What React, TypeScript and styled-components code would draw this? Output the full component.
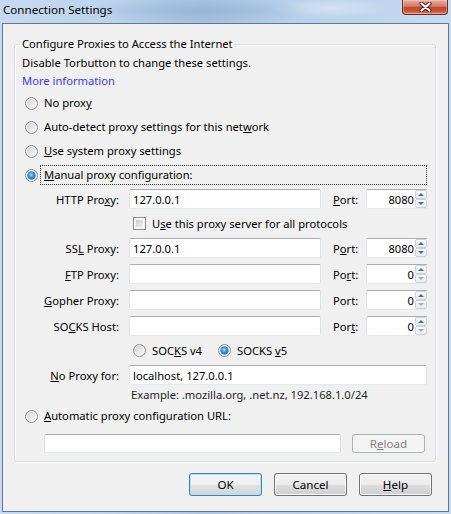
import React from 'react';
import styled, { createGlobalStyle, css } from 'styled-components';

const GlobalStyle = createGlobalStyle`
  html, body {
    margin: 0;
    padding: 0;
  }
  body {
    font-family: 'Noto Sans', 'Segoe UI', sans-serif;
    font-size: 11.2px;
    color: #000;
    background: #fff;
  }
  * {
    box-sizing: border-box;
  }
  u {
    text-decoration: underline;
    text-underline-offset: 1px;
  }
`;

const Window = styled.div`
  width: 451px;
  height: 514px;
  display: flex;
  flex-direction: column;
  padding: 0 2px 2px;
  background:
    radial-gradient(ellipse 110px 16px at 200px 11px, rgba(150, 180, 214, 0.9), rgba(150, 180, 214, 0)),
    radial-gradient(ellipse 60px 10px at 330px 8px, rgba(214, 228, 244, 0.9), rgba(214, 228, 244, 0)),
    linear-gradient(90deg, #c6dbf1 0%, #bdd3ec 25%, #adc6e2 45%, #b9d0ea 65%, #c7dbf1 100%);
`;

const TitleBar = styled.div`
  height: 23px;
  display: flex;
  justify-content: space-between;
  align-items: flex-start;
`;

const Title = styled.div`
  padding-left: 1px;
  line-height: 20px;
  font-size: 11.6px;
  color: #000;
`;

const CloseButton = styled.div`
  width: 46px;
  height: 15px;
  margin-right: 1px;
  border: 1px solid #6e2b20;
  border-top: none;
  border-radius: 0 0 4px 4px;
  background: linear-gradient(#e9aa9b 0%, #d67a66 45%, #c4452c 52%, #c8553a 80%, #dc8a6d 100%);
  box-shadow: inset 0 0 0 1px rgba(255, 255, 255, 0.3);
  display: flex;
  align-items: center;
  justify-content: center;
`;

const Client = styled.div`
  flex: 1;
  display: flex;
  flex-direction: column;
  background: #f0f0f0;
  border: 1px solid #62778f;
  padding: 12px 12px 0 11px;
`;

const GroupBox = styled.fieldset`
  margin: 0;
  padding: 0;
  min-width: 0;
  border: 1px solid #d5dfe5;
  border-radius: 3px;
  box-shadow: inset 1px 1px 0 #fff, 1px 1px 0 #fff;
`;

const Legend = styled.legend`
  margin-left: 5px;
  padding: 0 2px;
  line-height: 16px;
`;

const Body = styled.div`
  display: flex;
  flex-direction: column;
  padding: 0 7px 8px 7px;
`;

const Line = styled.div<{ $mt?: number; $indent?: number; $color?: string }>`
  height: 18px;
  line-height: 18px;
  margin-top: ${(p) => p.$mt ?? 0}px;
  padding-left: ${(p) => p.$indent ?? 0}px;
  color: ${(p) => p.$color ?? '#000'};
  white-space: nowrap;
`;

const RadioList = styled.div`
  display: flex;
  flex-direction: column;
  margin-top: 1px;
`;

const RadioRow = styled.div`
  display: flex;
  align-items: center;
  height: 24px;
  padding-left: 3px;
`;

const Radio = styled.span<{ $checked?: boolean }>`
  flex: none;
  width: 13px;
  height: 13px;
  border-radius: 50%;
  border: 1px solid #8d8f91;
  background: linear-gradient(135deg, #cdcdcd 0%, #e9e9e9 55%, #fbfbfb 100%);
  box-shadow: inset 0 0 0 1px #f6f6f6;
  display: flex;
  align-items: center;
  justify-content: center;
  ${(p) =>
    p.$checked &&
    css`
      &::after {
        content: '';
        width: 7px;
        height: 7px;
        border-radius: 50%;
        background: radial-gradient(circle at 45% 40%, #a9e4ff 0%, #2b93d6 45%, #0b4c86 100%);
        box-shadow: 0 0 0 0.5px #1b4f7e;
      }
    `}
`;

const RadioLabel = styled.span<{ $focused?: boolean }>`
  margin-left: 2px;
  padding: 0 3px;
  line-height: 18px;
  border: 1px dotted transparent;
  white-space: nowrap;
  ${(p) =>
    p.$focused &&
    css`
      flex: 1;
      margin-right: 1px;
      border-color: #3a3a3a;
    `}
`;

const ProxyRow = styled.div<{ $mt?: number }>`
  display: flex;
  align-items: center;
  height: 20px;
  margin-top: ${(p) => p.$mt ?? 6}px;
`;

const FieldLabel = styled.span`
  width: 97px;
  margin-right: 10px;
  text-align: right;
  white-space: nowrap;
`;

const TextField = styled.input<{ $width: number; $height?: number }>`
  width: ${(p) => p.$width}px;
  height: ${(p) => p.$height ?? 20}px;
  margin: 0;
  padding: 0 3px;
  font: inherit;
  color: #000;
  background: #fff;
  border: 1px solid;
  border-color: #abadb3 #dbdfe6 #e3e9ef #e2e3ea;
  border-radius: 2px;
  outline: none;
`;

const PortLabel = styled.span`
  width: 33px;
  margin-left: 12px;
  white-space: nowrap;
`;

const PortBox = styled.div`
  display: flex;
  width: 61px;
  height: 20px;
`;

const PortInput = styled(TextField)`
  text-align: right;
  padding: 0 1px 0 3px;
  border-right: none;
  border-radius: 2px 0 0 2px;
`;

const Spinner = styled.div`
  width: 12px;
  display: flex;
  flex-direction: column;
  border-top: 1px solid #abadb3;
  border-bottom: 1px solid #e3e9ef;
  background: #fff;
`;

const SpinButton = styled.div<{ $down?: boolean; $off?: boolean }>`
  flex: 1;
  display: flex;
  align-items: center;
  justify-content: center;
  border: 1px solid #cdd2d8;
  border-radius: 2px;
  background: linear-gradient(#f8f8f8, #e9ebee);
  &::after {
    content: '';
    border-left: 3px solid transparent;
    border-right: 3px solid transparent;
    ${(p) =>
      p.$down
        ? css`
            border-top: 3px solid ${p.$off ? '#a7a9ac' : '#4d6c9c'};
          `
        : css`
            border-bottom: 3px solid ${p.$off ? '#a7a9ac' : '#4d6c9c'};
          `}
  }
`;

const OptionRow = styled.div`
  display: flex;
  align-items: center;
  height: 17px;
  margin-top: 6px;
  padding-left: 111px;
`;

const Option = styled.label<{ $width?: number }>`
  display: flex;
  align-items: center;
  width: ${(p) => (p.$width ? `${p.$width}px` : 'auto')};
  white-space: nowrap;
`;

const OptionText = styled.span`
  margin-left: 6px;
`;

const CheckBox = styled.span`
  flex: none;
  width: 13px;
  height: 13px;
  border: 1px solid #8e8f8f;
  padding: 2px;
  background: linear-gradient(135deg, #c6c8cb, #f4f4f4) content-box, #f6f6f6;
`;

const UrlRow = styled.div`
  display: flex;
  align-items: center;
  margin-top: 6px;
  padding-left: 22px;
  height: 19px;
`;

const ButtonRow = styled.div`
  display: flex;
  justify-content: flex-end;
  gap: 12px;
  margin-top: 11px;
  padding-right: 4px;
`;

const Button = styled.button<{ $primary?: boolean; $height?: number; $ml?: number }>`
  width: 73px;
  height: ${(p) => p.$height ?? 23}px;
  margin: 0 0 0 ${(p) => p.$ml ?? 0}px;
  padding: 0;
  font: inherit;
  font-size: 11.6px;
  color: #000;
  border: 1px solid #707070;
  border-radius: 3px;
  background: linear-gradient(#f2f2f2 0%, #ebebeb 50%, #dddddd 51%, #cfcfcf 100%);
  box-shadow: inset 0 0 0 1px #fcfcfc;
  ${(p) =>
    p.$primary &&
    css`
      border-color: #3c7fb1;
      box-shadow: inset 0 0 0 1px #b5e3f8;
      background: linear-gradient(#f4f6f7 0%, #eceeef 50%, #e0e2e3 51%, #d3d6d8 100%);
    `}
  &:disabled {
    color: #838383;
    border-color: #adb2b5;
    background: #f4f4f4;
    box-shadow: none;
  }
`;

const CloseGlyph = () => (
  <svg width="13" height="10" viewBox="0 0 13 10">
    <path d="M2.5 1.5 L10.5 8.5 M10.5 1.5 L2.5 8.5" stroke="#5b2218" strokeWidth="4.2" strokeLinecap="round" />
    <path d="M2.5 1.5 L10.5 8.5 M10.5 1.5 L2.5 8.5" stroke="#ffffff" strokeWidth="2.2" strokeLinecap="round" />
  </svg>
);

const Spin = ({ atMin }: { atMin?: boolean }) => (
  <Spinner>
    <SpinButton />
    <SpinButton $down $off={atMin} />
  </Spinner>
);

const Port = ({ value, label }: { value: string; label: React.ReactNode }) => (
  <>
    <PortLabel>{label}</PortLabel>
    <PortBox>
      <PortInput $width={49} readOnly value={value} />
      <Spin atMin={value === '0'} />
    </PortBox>
  </>
);

interface ProxyProps {
  label: React.ReactNode;
  host: string;
  port: string;
  portLabel: React.ReactNode;
  mt?: number;
}

const ProxyLine = ({ label, host, port, portLabel, mt }: ProxyProps) => (
  <ProxyRow $mt={mt}>
    <FieldLabel>{label}</FieldLabel>
    <TextField $width={192} readOnly value={host} />
    <Port value={port} label={portLabel} />
  </ProxyRow>
);

export default function App() {
  return (
    <>
      <GlobalStyle />
      <Window>
        <TitleBar>
          <Title>Connection Settings</Title>
          <CloseButton>
            <CloseGlyph />
          </CloseButton>
        </TitleBar>
        <Client>
          <GroupBox>
            <Legend>Configure Proxies to Access the Internet</Legend>
            <Body>
              <Line $mt={2}>Disable Torbutton to change these settings.</Line>
              <Line $color="#3b3bf2">More information</Line>
              <RadioList>
                <RadioRow>
                  <Radio />
                  <RadioLabel>
                    No prox<u>y</u>
                  </RadioLabel>
                </RadioRow>
                <RadioRow>
                  <Radio />
                  <RadioLabel>
                    Auto-detect proxy settings for this net<u>w</u>ork
                  </RadioLabel>
                </RadioRow>
                <RadioRow>
                  <Radio />
                  <RadioLabel>
                    <u>U</u>se system proxy settings
                  </RadioLabel>
                </RadioRow>
                <RadioRow>
                  <Radio $checked />
                  <RadioLabel $focused>
                    <u>M</u>anual proxy configuration:
                  </RadioLabel>
                </RadioRow>
              </RadioList>

              <ProxyLine
                mt={2}
                label={<>HTTP Pro<u>x</u>y:</>}
                host="127.0.0.1"
                port="8080"
                portLabel={<><u>P</u>ort:</>}
              />
              <OptionRow>
                <Option>
                  <CheckBox />
                  <OptionText>
                    U<u>s</u>e this proxy server for all protocols
                  </OptionText>
                </Option>
              </OptionRow>
              <ProxyLine
                label={<>SS<u>L</u> Proxy:</>}
                host="127.0.0.1"
                port="8080"
                portLabel={<>P<u>o</u>rt:</>}
              />
              <ProxyLine
                label={<><u>F</u>TP Proxy:</>}
                host=""
                port="0"
                portLabel={<>Po<u>r</u>t:</>}
              />
              <ProxyLine
                label={<><u>G</u>opher Proxy:</>}
                host=""
                port="0"
                portLabel="Port:"
              />
              <ProxyLine
                label={<>SO<u>C</u>KS Host:</>}
                host=""
                port="0"
                portLabel={<>Por<u>t</u>:</>}
              />
              <OptionRow>
                <Option $width={85}>
                  <Radio />
                  <OptionText>
                    SOC<u>K</u>S v4
                  </OptionText>
                </Option>
                <Option>
                  <Radio $checked />
                  <OptionText>
                    SOCKS <u>v</u>5
                  </OptionText>
                </Option>
              </OptionRow>
              <ProxyRow>
                <FieldLabel>
                  <u>N</u>o Proxy for:
                </FieldLabel>
                <TextField $width={298} readOnly value="localhost, 127.0.0.1" />
              </ProxyRow>
              <Line $mt={1} $indent={109} $color="#1e1e1e">
                Example: .mozilla.org, .net.nz, 192.168.1.0/24
              </Line>
              <RadioRow>
                <Radio />
                <RadioLabel>
                  <u>A</u>utomatic proxy configuration URL:
                </RadioLabel>
              </RadioRow>
              <UrlRow>
                <TextField $width={297} $height={19} readOnly value="" />
                <Button disabled $height={19} $ml={11}>
                  R<u>e</u>load
                </Button>
              </UrlRow>
            </Body>
          </GroupBox>
          <ButtonRow>
            <Button $primary>OK</Button>
            <Button>Cancel</Button>
            <Button>
              <u>H</u>elp
            </Button>
          </ButtonRow>
        </Client>
      </Window>
    </>
  );
}
